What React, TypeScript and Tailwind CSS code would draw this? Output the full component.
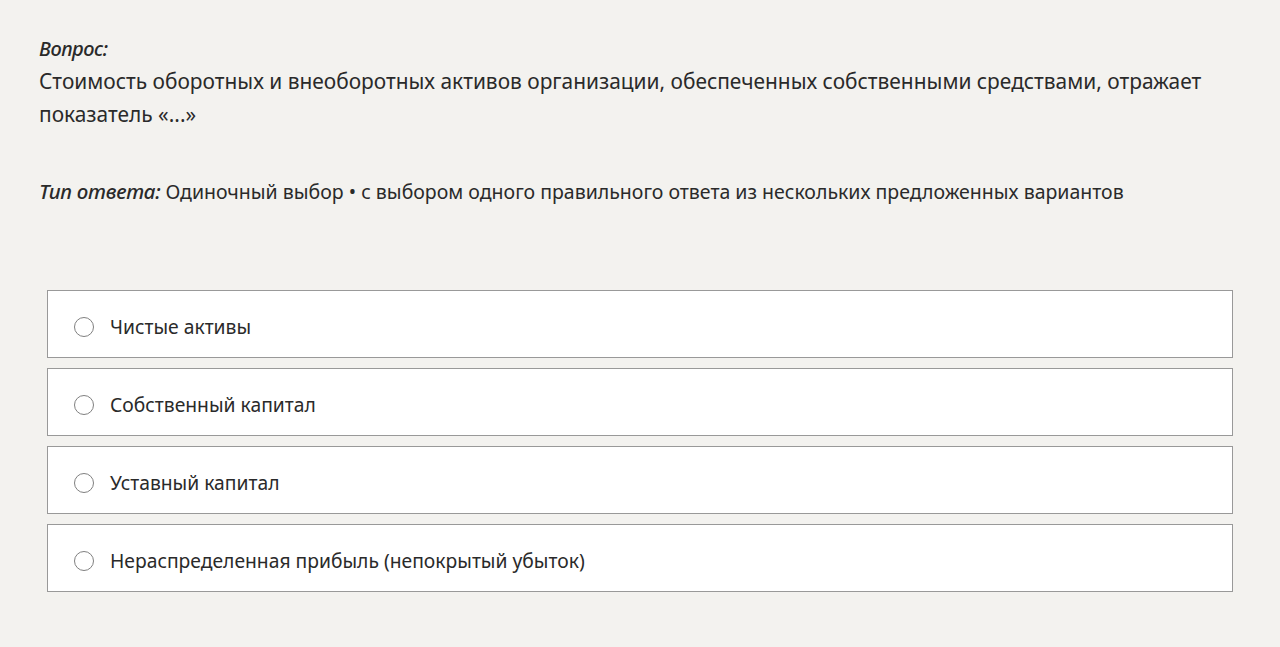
export default function App() {
  const options = [
    "Чистые активы",
    "Собственный капитал",
    "Уставный капитал",
    "Нераспределенная прибыль (непокрытый убыток)",
  ];
  return (
    <div
      className="min-h-[647px] w-full bg-[#f3f2ef] text-[#2a2a2a]"
      style={{ fontFamily: '"Noto Sans", "Open Sans", sans-serif' }}
    >
      <div className="px-[39px] pt-[35px]">
        <div className="text-[20px] italic font-medium leading-[28px] tracking-[-0.5px]">Вопрос:</div>
        <div className="text-[20.9px] leading-[33px] mt-[2px]">
          Стоимость оборотных и внеоборотных активов организации, обеспеченных собственными средствами, отражает показатель «...»
        </div>
        <div className="text-[19.5px] leading-[33px] mt-[44px]">
          <span className="italic font-medium tracking-[-0.3px] text-[20.5px]">Тип ответа:</span> Одиночный выбор • с выбором одного правильного ответа из нескольких предложенных вариантов
        </div>
      </div>
      <div className="mx-[47px] mt-[82px] flex flex-col gap-[10px]">
        {options.map((o) => (
          <div
            key={o}
            className="h-[68px] bg-white border-[1.5px] border-[#999999] flex items-center pl-[26px] pt-[6px]"
          >
            <span className="w-[20px] h-[20px] rounded-full border-[1.5px] border-[#808080] bg-white shrink-0" />
            <span className="ml-[16px] text-[19.3px] leading-[28px]">{o}</span>
          </div>
        ))}
      </div>
    </div>
  );
}
